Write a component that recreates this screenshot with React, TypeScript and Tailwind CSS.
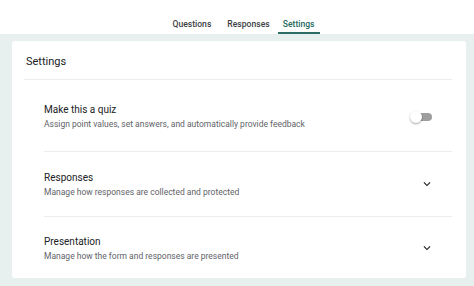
import React from 'react';

const Chevron: React.FC = () => (
  <svg width="14" height="14" viewBox="0 0 24 24" className="text-[#202124]">
    <path d="M7.41 8.59 12 13.17l4.59-4.58L18 10l-6 6-6-6z" fill="currentColor" />
  </svg>
);

export default function App() {
  return (
    <div className="w-[474px] h-[286px] bg-[#e8f0ef] font-['Roboto',sans-serif] flex flex-col">
      {/* tab bar */}
      <div className="h-[34px] bg-white flex justify-center pl-[13px] text-[8.6px] leading-[12px] font-medium">
        <div className="flex items-end pb-[4px] px-[5px] text-[#3c4043]">Questions</div>
        <div className="flex items-end pb-[4px] px-[5px] ml-[6px] text-[#3c4043]">Responses</div>
        <div className="flex items-end pb-[2px] px-[5px] ml-[3px] text-[#1e6a5f] border-b-[2px] border-[#2c6e63]">
          Settings
        </div>
      </div>

      <div className="flex-1 pl-[12px] pr-[8px] pt-[7px] pb-[8px]">
        <div className="bg-white h-full rounded-[3px] pl-[12px] pr-[14px]">
          <div className="h-[39px] pt-[14px] pl-[2px] border-b border-[#ececec] text-[11px] leading-[14px] text-[#202124]">
            Settings
          </div>

          <div className="pl-[20px]">
            {/* quiz */}
            <div className="h-[72px] pt-[23px] flex justify-between items-start border-b border-[#ececec]">
              <div className="flex flex-col">
                <span className="text-[10px] leading-[14px] text-[#202124]">Make this a quiz</span>
                <span className="text-[8.5px] leading-[15px] text-[#5f6368]">
                  Assign point values, set answers, and automatically provide feedback
                </span>
              </div>
              <div className="relative w-[22px] h-[12px] mt-[8px] mr-[20px]">
                <div className="absolute left-[5px] right-0 top-[2px] h-[8px] rounded-full bg-[#9e9e9e]" />
                <div className="absolute left-0 top-0 w-[12px] h-[12px] rounded-full bg-white shadow-[0_1px_2px_rgba(0,0,0,0.35)]" />
              </div>
            </div>

            {/* responses */}
            <div className="h-[65px] pt-[19px] flex justify-between items-start border-b border-[#ececec]">
              <div className="flex flex-col">
                <span className="text-[10px] leading-[14px] text-[#202124]">Responses</span>
                <span className="text-[8.5px] leading-[15px] text-[#5f6368]">
                  Manage how responses are collected and protected
                </span>
              </div>
              <div className="mt-[6px] mr-[18px]">
                <Chevron />
              </div>
            </div>

            {/* presentation */}
            <div className="pt-[18px] flex justify-between items-start">
              <div className="flex flex-col">
                <span className="text-[10px] leading-[14px] text-[#202124]">Presentation</span>
                <span className="text-[8.5px] leading-[15px] text-[#5f6368]">
                  Manage how the form and responses are presented
                </span>
              </div>
              <div className="mt-[6px] mr-[18px]">
                <Chevron />
              </div>
            </div>
          </div>
        </div>
      </div>
    </div>
  );
}
